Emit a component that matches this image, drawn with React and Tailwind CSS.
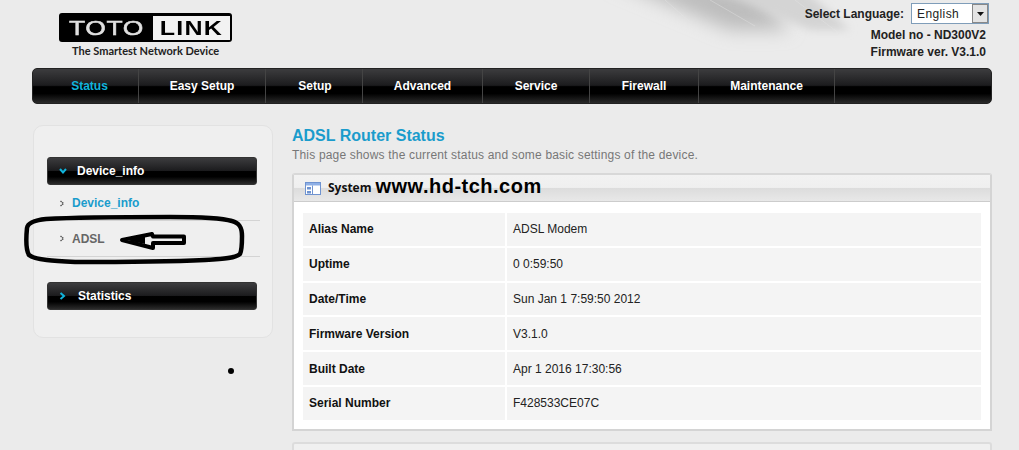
const navItems = [
  { label: 'Status', w: 'w-[106px] pl-[8px]', active: true },
  { label: 'Easy Setup', w: 'w-[127px]' },
  { label: 'Setup', w: 'w-[97px] pl-[2px]' },
  { label: 'Advanced', w: 'w-[120px]' },
  { label: 'Service', w: 'w-[107px]' },
  { label: 'Firewall', w: 'w-[109px]' },
  { label: 'Maintenance', w: 'w-[136px]' },
];

const rows = [
  ['Alias Name', 'ADSL Modem'],
  ['Uptime', '0 0:59:50'],
  ['Date/Time', 'Sun Jan 1 7:59:50 2012'],
  ['Firmware Version', 'V3.1.0'],
  ['Built Date', 'Apr 1 2016 17:30:56'],
  ['Serial Number', 'F428533CE07C'],
];

const glossy = 'bg-[linear-gradient(to_bottom,#3c3c3e_0%,#1c1c1e_48%,#000_52%,#000_72%,#2a2a2a_100%)]';

const Chevron = ({ down }) => (
  <svg width="9" height="8" viewBox="0 0 9 8" className="shrink-0">
    <path d={down ? 'M1 2 L4 5.5 L7 2' : 'M1.5 1 L5 4 L1.5 7'} fill="none" stroke="#10b4dc" strokeWidth="2" />
  </svg>
);

const Bullet = () => (
  <svg width="5" height="7" viewBox="0 0 5 7" className="shrink-0">
    <path d="M0.5 1 L3.5 3.5 L0.5 6" fill="none" stroke="#555" strokeWidth="1.4" strokeDasharray="1.5 0.6" />
  </svg>
);

const SideButton = ({ label, down }) => (
  <div className={`flex h-[28px] w-[210px] items-center rounded-[3px] border border-[#333] ${glossy}`}>
    <span className="ml-[11px] w-[19px]"><Chevron down={down} /></span>
    <span className={`text-[12px] font-bold text-white ${down ? 'ml-[-1px]' : ''}`}>{label}</span>
  </div>
);

const App = () => {
  return (
    <div className="relative h-[450px] w-[1019px] overflow-hidden bg-[#ebebeb] font-['Liberation_Sans',Arial,sans-serif]">
      {/* swoosh behind the header */}
      <svg className="absolute left-[540px] top-0" width="320" height="70" viewBox="0 0 320 70">
        <defs>
          <filter id="soft" x="-30%" y="-60%" width="160%" height="220%">
            <feGaussianBlur stdDeviation="9" />
          </filter>
          <filter id="softer" x="-30%" y="-60%" width="160%" height="220%">
            <feGaussianBlur stdDeviation="4" />
          </filter>
        </defs>
        <path d="M70 -20 L150 -20 L215 -10 L250 30 L190 30 Z" fill="#bdbdbd" filter="url(#soft)" />
        <path d="M175 -10 L265 -10 L310 30 L270 30 Z" fill="#d4d4d4" filter="url(#softer)" />
        <path d="M125 0 L150 22 M170 0 L215 26 M255 0 L300 34" stroke="#e6e6e6" strokeWidth="1" opacity="0.4" fill="none" />
      </svg>

      <header className="relative h-[68px]">
        <div className="absolute left-[59px] top-[13px] flex h-[29px] w-[173px] items-center rounded-[3px] bg-black">
          <span className="ml-[10px] w-[84px] origin-left scale-x-[1.26] text-[21px] leading-none tracking-[0.5px] text-[#e0e0e0] [-webkit-text-stroke:0.5px_#e0e0e0] font-['Liberation_Sans',sans-serif]">TOTO</span>
          <span className="flex h-[24px] w-[77px] items-center justify-center bg-[#f2f2f2] text-[20px] font-bold leading-none tracking-[1px] text-black font-['Liberation_Sans',sans-serif]">
            <span className="scale-x-[1.25]">LINK</span>
          </span>
        </div>
        <div className="absolute left-[72px] top-[44px] text-[11px] font-bold leading-[14px] text-[#222] font-['Lato',sans-serif]">The Smartest Network Device</div>

        <div className="absolute right-[30px] top-[3px] flex w-[220px] flex-col items-end">
          <div className="flex items-center">
            <span className="mr-[7px] text-[12px] font-bold text-[#222]">Select Language:</span>
            <div className="flex h-[21px] w-[78px] items-center border border-[#7f9db9] bg-white pl-[5px]">
              <span className="flex-1 text-[12px] tracking-[0.4px] text-[#222]">English</span>
              <span className="flex h-[19px] w-[16px] items-center justify-center border border-[#888] bg-[#e4e4e4]">
                <svg width="7" height="4" viewBox="0 0 7 4"><path d="M0 0 H7 L3.5 4 Z" fill="#111" /></svg>
              </span>
            </div>
          </div>
          <div className="mr-[3px] mt-[3px] text-[12px] font-bold leading-[17px] text-[#222]">Model no - ND300V2</div>
          <div className="mr-[3px] text-[12px] font-bold leading-[17px] text-[#222]">Firmware ver. V3.1.0</div>
        </div>
      </header>

      <nav className={`relative ml-[32px] flex h-[36px] w-[960px] rounded-[5px] border border-[#222] ${glossy}`}>
        {navItems.map((item) => (
          <div
            key={item.label}
            className={`flex items-center justify-center border-r border-[#444] text-[12px] font-bold ${item.w} ${item.active ? 'text-[#10b4dc]' : 'text-white'}`}
          >
            {item.label}
          </div>
        ))}
      </nav>

      <div className="relative flex items-start pt-[21px]">
        <aside className="ml-[33px] flex h-[213px] w-[240px] flex-col rounded-[10px] border border-[#e2e2e2] bg-[#efefef] pl-[13px] pt-[31px]">
          <SideButton label="Device_info" down />
          <div className="flex h-[36px] w-[213px] items-center gap-[8px] border-b border-[#d4d4d4] pl-[13px] pt-[1px]">
            <Bullet />
            <span className="ml-[-1px] text-[12px] font-bold text-[#1a9ccc]">Device_info</span>
          </div>
          <div className="flex h-[36px] w-[213px] items-center gap-[8px] border-b border-[#d4d4d4] pl-[13px]">
            <Bullet />
            <span className="ml-[-1px] text-[12px] font-bold text-[#666]">ADSL</span>
          </div>
          <div className="mt-[25px]">
            <SideButton label="Statistics" />
          </div>
        </aside>

        <main className="ml-[19px] w-[700px]">
          <h1 className="mt-[1px] text-[16px] font-bold leading-[20px] text-[#1a9ccc]">ADSL Router Status</h1>
          <p className="mt-[2px] text-[12px] leading-[15px] tracking-[0.18px] text-[#777]">This page shows the current status and some basic settings of the device.</p>
          <section className="mt-[10px] h-[258px] rounded-t-[3px] border-2 border-[#d4d4d4] border-t-[#d8d8d8] bg-white">
            <div className="flex h-[27px] items-center border-b border-[#ccc] bg-[linear-gradient(to_bottom,#f2f2f2_0%,#efefef_48%,#dcdcdc_50%,#e8e8e8_100%)] pl-[11px]">
              <svg width="16" height="13" viewBox="0 0 16 13" className="shrink-0">
                <rect x="0.5" y="0.5" width="15" height="12" fill="#fff" stroke="#6f93d0" />
                <rect x="1" y="1" width="14" height="2.5" fill="#8fb0e6" />
                <rect x="2" y="5" width="4" height="2.5" fill="#6f93d0" />
                <rect x="2" y="9" width="4" height="2.5" fill="#6f93d0" />
                <path d="M7.5 3.5 V12" stroke="#6f93d0" />
              </svg>
              <span className="ml-[7px] text-[12px] font-bold leading-none text-[#111] font-['Open_Sans',sans-serif]">System</span>
              <span className="mb-[4px] ml-[4px] text-[20px] font-bold leading-none tracking-[0.5px] text-black">www.hd-tch.com</span>
            </div>
            <div className="ml-[9px] mt-[11px] flex w-[678px] flex-col gap-[2px]">
              {rows.map(([name, value]) => (
                <div key={name} className="flex h-[32.8px] gap-[2px]">
                  <div className="flex w-[202px] items-center bg-[#f4f4f4] pl-[6px] text-[12px] font-bold text-[#111]">{name}</div>
                  <div className="flex flex-1 items-center bg-[#f4f4f4] pl-[6px] text-[12px] text-[#222]">{value}</div>
                </div>
              ))}
            </div>
          </section>
          <div className="mt-[11px] h-[40px] rounded-t-[3px] border-2 border-[#dcdcdc] bg-[#f0f0f0]" />
        </main>
      </div>

      {/* hand drawn marks over the page */}
      <svg className="pointer-events-none absolute left-0 top-0" width="1019" height="450" viewBox="0 0 1019 450">
        <path
          d="M27 228 C28 222 36 220 46 219 C80 217 130 217 170 217 C195 217 222 218 232 221 C240 223 242 228 242 236 C242 245 242 250 240 254 C236 258 225 259 205 260 C160 262 110 262 75 262 C55 261 35 260 29 255 C26 250 26 238 27 228 Z"
          fill="none"
          stroke="#000"
          strokeWidth="4.5"
        />
        <path
          d="M122 240 L152 234 L153 236.5 L184 236.5 L184 243 L153 243 L153 248 Z"
          fill="#efefef"
          stroke="#000"
          strokeWidth="4"
          strokeLinejoin="round"
        />
        <path d="M126 240 L145 236 V244 Z" fill="#000" />
        <circle cx="231" cy="371" r="3" fill="#000" />
      </svg>
    </div>
  );
};

export default App;
